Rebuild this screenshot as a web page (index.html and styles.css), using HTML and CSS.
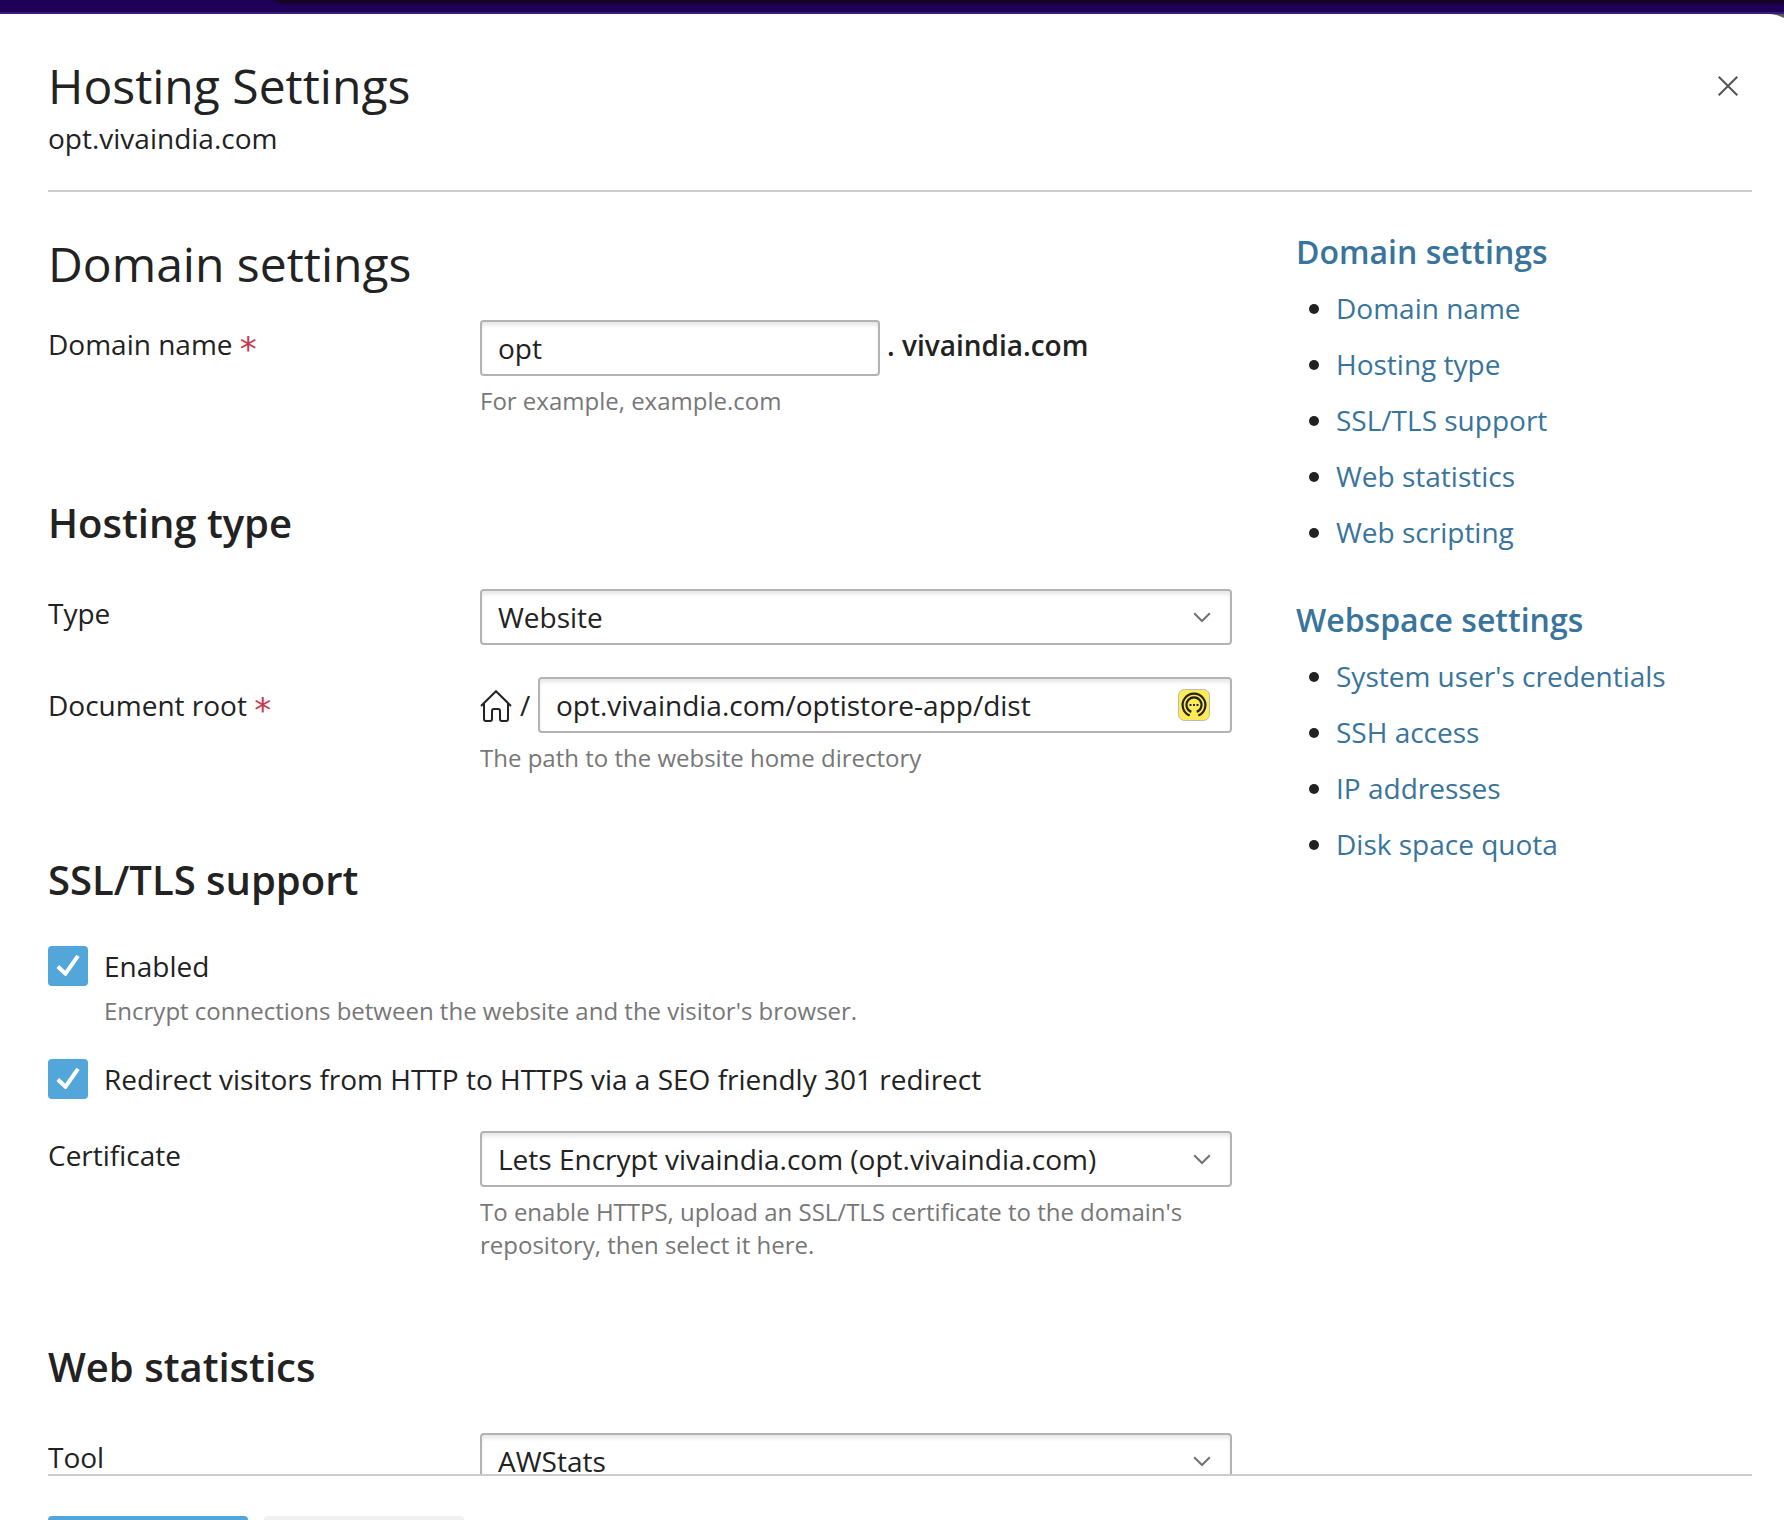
FILE: index.html
```html
<!DOCTYPE html>
<html lang="en">
<head>
<meta charset="utf-8">
<title>Hosting Settings</title>
<link rel="stylesheet" href="styles.css">
</head>
<body>
<div class="topbar"><div class="topbar-search"></div></div>
<div class="drawer">
  <header class="header">
    <div>
      <h1 class="title">Hosting Settings</h1>
      <div class="subtitle">opt.vivaindia.com</div>
    </div>
    <svg class="close" width="20" height="20" viewBox="0 0 20 20"><path d="M.7.7l18.6 18.6M19.3.7L.7 19.3"/></svg>
  </header>
  <main class="content">
    <div class="form">
      <h2 class="heading">Domain settings</h2>
      <div class="row">
        <label class="label">Domain name <span class="required">*</span></label>
        <div class="control">
          <div class="line">
            <div class="input input-short">opt</div>
            <div class="suffix">. vivaindia.com</div>
          </div>
          <div class="hint">For example, example.com</div>
        </div>
      </div>

      <h3 class="section">Hosting type</h3>
      <div class="row">
        <label class="label">Type</label>
        <div class="control">
          <div class="input">Website<svg class="chevron" width="18" height="11" viewBox="0 0 18 11"><path d="M1.2 1.2L9 9l7.800-7.800"/></svg></div>
        </div>
      </div>
      <div class="row">
        <label class="label label-center">Document root <span class="required">*</span></label>
        <div class="control">
          <div class="line">
            <svg class="home" width="32" height="32" viewBox="0 0 32 32"><path d="M1 16L16 1.200 31 16M4 13.500V29q0 2 2 2h4q2 0 2-2V21q0-2 2-2h4q2 0 2 2v8q0 2 2 2h4q2 0 2-2V13.500"/></svg>
            <span class="slash">/</span>
            <div class="input">opt.vivaindia.com/optistore-app/dist
              <svg class="badge" width="32" height="32" viewBox="0 0 32 32"><rect x=".5" y=".5" width="31" height="31" rx="6" fill="#ffec55" stroke="#bbb"/><g fill="none" stroke="#222" stroke-width="2.200"><path d="M11.700 26.600A11.400 11.400 0 1 1 20.300 26.600"/><path d="M13.300 22.900A7.500 7.500 0 1 1 18.700 22.900"/></g><path d="M11.500 15h2v2h-2zM15 15h2v2h-2zM18.500 15h2v2h-2z" fill="#222"/></svg>
            </div>
          </div>
          <div class="hint">The path to the website home directory</div>
        </div>
      </div>

      <h3 class="section">SSL/TLS support</h3>
      <div class="row check-row">
        <div class="checkbox"><svg width="24" height="22" viewBox="0 0 24 22"><path d="M1.800 12.500L9.500 19.700 22 1.800"/></svg></div>
        <div><div>Enabled</div><div class="hint">Encrypt connections between the website and the visitor's browser.</div></div>
      </div>
      <div class="row check-row">
        <div class="checkbox"><svg width="24" height="22" viewBox="0 0 24 22"><path d="M1.800 12.500L9.500 19.700 22 1.800"/></svg></div>
        <div>Redirect visitors from HTTP to HTTPS via a SEO friendly 301 redirect</div>
      </div>
      <div class="row">
        <label class="label">Certificate</label>
        <div class="control">
          <div class="input">Lets Encrypt vivaindia.com (opt.vivaindia.com)<svg class="chevron" width="18" height="11" viewBox="0 0 18 11"><path d="M1.200 1.200L9 9l7.800-7.800"/></svg></div>
          <div class="hint">To enable HTTPS, upload an SSL/TLS certificate to the domain's repository, then select it here.</div>
        </div>
      </div>

      <h3 class="section">Web statistics</h3>
      <div class="row">
        <label class="label">Tool</label>
        <div class="control">
          <div class="input">AWStats<svg class="chevron" width="18" height="11" viewBox="0 0 18 11"><path d="M1.200 1.200L9 9l7.800-7.800"/></svg></div>
        </div>
      </div>
    </div>
    <nav class="side">
      <h4 class="side-title">Domain settings</h4>
      <ul class="links">
        <li><a>Domain name</a></li>
        <li><a>Hosting type</a></li>
        <li><a>SSL/TLS support</a></li>
        <li><a>Web statistics</a></li>
        <li><a>Web scripting</a></li>
      </ul>
      <h4 class="side-title">Webspace settings</h4>
      <ul class="links">
        <li><a>System user's credentials</a></li>
        <li><a>SSH access</a></li>
        <li><a>IP addresses</a></li>
        <li><a>Disk space quota</a></li>
      </ul>
    </nav>
  </main>
  <footer class="footer">
    <div class="button button-primary"></div>
    <div class="button"></div>
  </footer>
</div>
</body>
</html>
```
FILE: styles.css
```css
* { box-sizing: border-box; }
html, body { height: 100%; }
body {
  margin: 0;
  height: 1520px;
  overflow: hidden;
  display: flex;
  flex-direction: column;
  background: #5b5b5b;
  color: #222;
  font: 28px/40px "Open Sans", sans-serif;
}
h1, h2, h3, h4, ul { margin: 0; padding: 0; font-weight: 400; }

.topbar {
  flex: none;
  height: 14px;
  padding-left: 274px;
  background: #1f0058;
  border-bottom: 2px solid #3b1b76;
}
.topbar-search {
  height: 4px;
  background: #140526;
  border-bottom-left-radius: 12px 4px;
}

.drawer {
  flex: 1;
  min-height: 0;
  width: 1792px;
  display: flex;
  flex-direction: column;
  padding: 0 40px 0 48px;
  background: #fff;
  border-top-right-radius: 24px 16px;
}
.header {
  flex: none;
  height: 178px;
  display: flex;
  justify-content: space-between;
  align-items: flex-start;
  padding-top: 44px;
  border-bottom: 2px solid #ccc;
}
.title { font-size: 48px; line-height: 56px; }
.subtitle { margin-top: 4px; }
.close { margin: 18px 14px 0 0; fill: none; stroke: #555; stroke-width: 2; }

.content {
  flex: none;
  height: 1282px;
  overflow: hidden;
  display: flex;
  gap: 64px;
}
.form { width: 1184px; padding-top: 44px; }
.heading { margin-bottom: 28px; font-size: 48px; line-height: 56px; }
.section { margin: 82px 0 42px; font-size: 40px; line-height: 48px; font-weight: 600; }

.row { display: flex; margin-bottom: 32px; }
.row:has(+ .section) { margin-bottom: 0; }
.label { width: 432px; padding-top: 4px; }
.label-center { padding-top: 8px; }
.required {
  position: relative;
  top: 6px;
  color: #c63a50;
  font: 34px/0 "DejaVu Sans", sans-serif;
}
.control { flex: 1; }
.line { display: flex; align-items: center; }
.input {
  flex: 1;
  height: 56px;
  display: flex;
  align-items: center;
  justify-content: space-between;
  padding: 0 20px 0 16px;
  border: 2px solid #b3b3b3;
  border-radius: 4px;
  box-shadow: inset 0 4px 4px -1px #e6e6e6;
  white-space: nowrap;
}
.input-short { flex: none; width: 400px; }
.suffix { margin: -6px 0 0 7px; font-weight: 600; }
.hint { margin-top: 8px; font-size: 24px; line-height: 33px; color: #777; }
.chevron { margin: 1px -1px 0 0; fill: none; stroke: #737373; stroke-width: 2; }
.home { margin-top: 2px; fill: none; stroke: #222; stroke-width: 2; }
.slash { width: 26px; padding-left: 8px; }

.check-row { gap: 16px; }
.checkbox {
  width: 40px;
  height: 40px;
  display: flex;
  justify-content: center;
  padding-top: 8px;
  border-radius: 4px;
  background: #53a6d9;
}
.checkbox svg { fill: none; stroke: #fff; stroke-width: 4; }

.side { padding-top: 40px; }
.side-title { color: #38749b; font-size: 32px; font-weight: 600; }
.links { margin: 16px 0 48px; list-style: none; display: grid; gap: 16px; color: #38749b; }
.links li { display: flex; align-items: center; }
.links li::before {
  content: "";
  width: 10px;
  height: 10px;
  margin: 2px 17px 0 13px;
  border-radius: 50%;
  background: #222;
}

.footer {
  flex: none;
  height: 90px;
  display: flex;
  gap: 16px;
  padding-top: 40px;
  border-top: 2px solid #ccc;
}
.button { width: 200px; height: 56px; border-radius: 4px; background: #f0f0f0; }
.button-primary { background: #53a6d9; }
```
